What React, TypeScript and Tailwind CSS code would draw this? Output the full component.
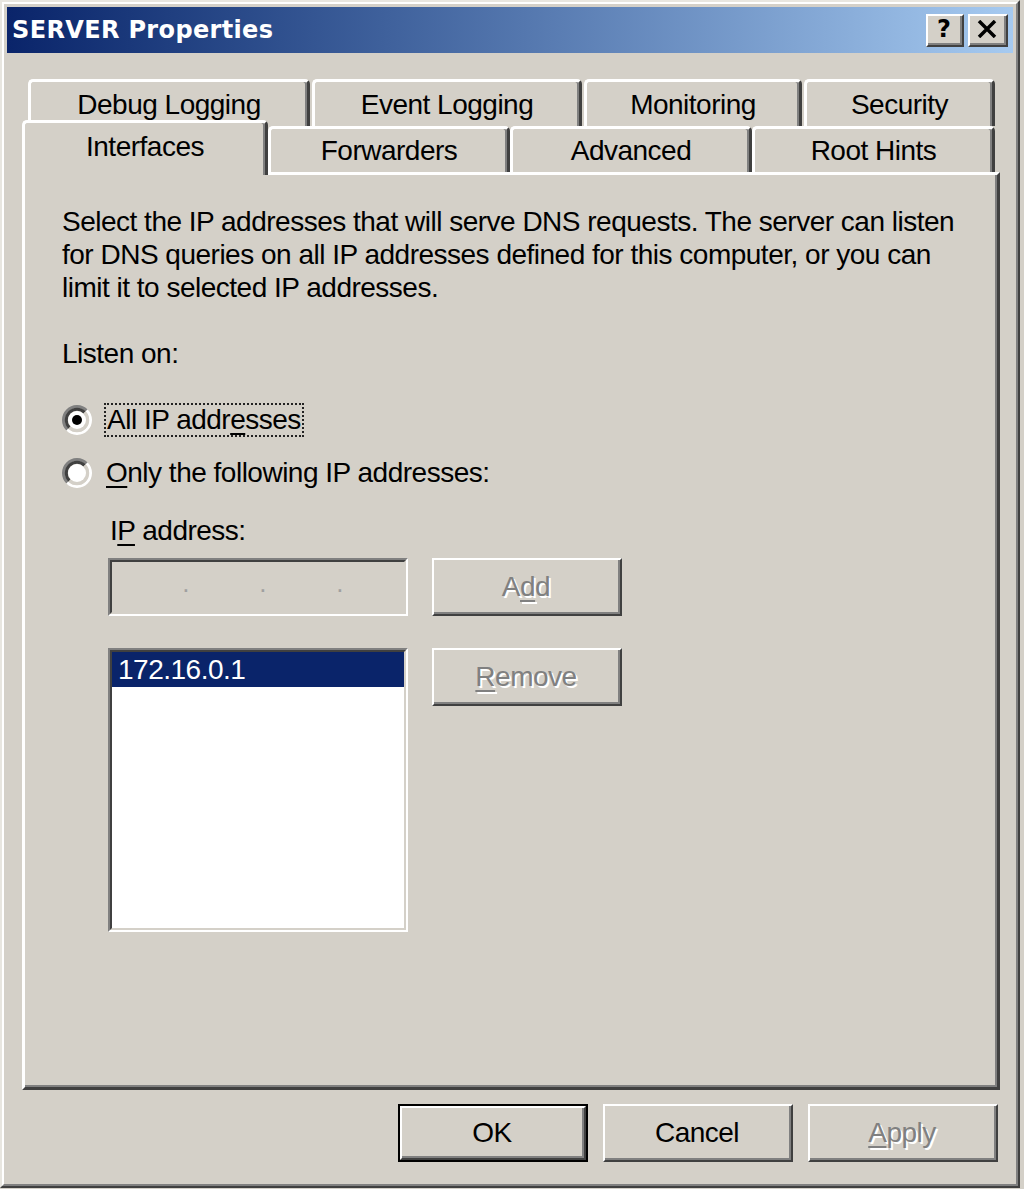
import React from "react";

function Radio({ checked }: { checked?: boolean }) {
  return (
    <svg width="30" height="30" viewBox="0 0 30 30" className="shrink-0">
      <path d="M5.45 24.55 A13.5 13.5 0 0 1 24.55 5.45" fill="none" stroke="#808080" strokeWidth="3" />
      <path d="M24.55 5.45 A13.5 13.5 0 0 1 5.45 24.55" fill="none" stroke="#ffffff" strokeWidth="3" />
      <path d="M7.42 22.58 A10.5 10.5 0 0 1 22.58 7.42" fill="none" stroke="#404040" strokeWidth="3" />
      <path d="M22.58 7.42 A10.5 10.5 0 0 1 7.42 22.58" fill="none" stroke="#d4d0c8" strokeWidth="3" />
      <circle cx="15" cy="15" r="9" fill="#ffffff" />
      {checked && <circle cx="15" cy="15" r="5" fill="#000000" />}
    </svg>
  );
}

function Raised({ children, className }: { children: React.ReactNode; className?: string }) {
  return (
    <div className={"border-[2px] border-t-white border-l-white border-r-[#404040] border-b-[#404040] bg-[#d4d0c8] " + (className ?? "")}>
      <div className="flex h-full w-full items-center justify-center border-r-[2px] border-b-[2px] border-r-[#808080] border-b-[#808080]">
        {children}
      </div>
    </div>
  );
}

function Sunken({ children, className, innerClass }: { children?: React.ReactNode; className?: string; innerClass?: string }) {
  return (
    <div className={"border-[2px] border-t-[#808080] border-l-[#808080] border-r-white border-b-white " + (className ?? "")}>
      <div className={"h-full w-full border-[2px] border-t-[#404040] border-l-[#404040] border-r-[#d4d0c8] border-b-[#d4d0c8] " + (innerClass ?? "")}>
        {children}
      </div>
    </div>
  );
}

const dis = "text-[#808080] [text-shadow:2px_2px_0_#ffffff]";

function U({ children }: { children: React.ReactNode }) {
  return <span className="underline decoration-[2px] underline-offset-[4px]">{children}</span>;
}

function BackTab({ label, w }: { label: string; w: string }) {
  return (
    <div className={"flex h-[47px] items-center justify-center rounded-t-[5px] border-l-[3px] border-t-[3px] border-r-[3px] border-l-white border-t-white border-r-[#404040] bg-[#d4d0c8] shadow-[inset_-2px_0_0_#808080] " + w}>
      {label}
    </div>
  );
}

function FrontTab({ label, w }: { label: string; w: string }) {
  return (
    <div className={"mt-[6px] flex h-[46px] items-center justify-center rounded-t-[5px] border-l-[3px] border-t-[3px] border-r-[3px] border-l-white border-t-white border-r-[#404040] bg-[#d4d0c8] shadow-[inset_-2px_0_0_#808080] " + w}>
      {label}
    </div>
  );
}

export default function App() {
  return (
    <div className="h-[1189px] w-[1024px] bg-[#d4d0c8] font-['Liberation_Sans',Arial,sans-serif] text-[28px] leading-[33px] tracking-[-0.5px] text-black">
      <div className="h-[1188px] w-[1020px] border-[2px] border-t-[#e8e6e0] border-l-[#e8e6e0] border-r-[#404040] border-b-[#404040]">
        <div className="h-full w-full border-[2px] border-t-white border-l-white border-r-[#808080] border-b-[#808080] p-[3px]">
          {/* Title bar */}
          <div className="flex h-[46px] items-center justify-between bg-linear-to-r from-[#0a246a] to-[#a6caf0] pl-[5px] pr-[5px]">
            <span className="font-['DejaVu_Sans',sans-serif] text-[24px] font-bold tracking-[0.35px] text-white">SERVER Properties</span>
            <div className="flex gap-[4px]">
              <Raised className="h-[33px] w-[38px]">
                <span className="font-['DejaVu_Sans',sans-serif] text-[24px] font-bold leading-none tracking-[0px]">?</span>
              </Raised>
              <Raised className="h-[33px] w-[40px]">
                <svg width="20" height="18" viewBox="0 0 20 18">
                  <path d="M2 1 L18 17 M18 1 L2 17" stroke="#000" strokeWidth="3.5" />
                </svg>
              </Raised>
            </div>
          </div>

          {/* Body */}
          <div className="ml-[15px] mt-[26px] w-[978px]">
            {/* Tab row 1 */}
            <div className="ml-[6px] flex gap-[2px]">
              <BackTab label="Debug Logging" w="w-[282px]" />
              <BackTab label="Event Logging" w="w-[270px]" />
              <BackTab label="Monitoring" w="w-[218px]" />
              <BackTab label="Security" w="w-[191px]" />
            </div>
            {/* Tab row 2 */}
            <div className="relative z-10 mt-[-6px] flex items-start">
              <div className="flex h-[55px] w-[246px] items-start justify-center rounded-t-[5px] border-l-[3px] border-t-[3px] border-r-[3px] border-l-white border-t-white border-r-[#404040] bg-[#d4d0c8] pt-[7px] shadow-[inset_-2px_0_0_#808080]">
                Interfaces
              </div>
              <FrontTab label="Forwarders" w="w-[242px]" />
              <FrontTab label="Advanced" w="w-[242px]" />
              <FrontTab label="Root Hints" w="w-[243px]" />
            </div>
            {/* Panel */}
            <div className="mt-[-3px] h-[918px] w-[978px] border-[3px] border-t-white border-l-white border-r-[#404040] border-b-[#404040]">
              <div className="h-full w-full border-r-[2px] border-b-[2px] border-r-[#808080] border-b-[#808080] pl-[37px] pt-[30px]">
                <p className="whitespace-nowrap">
                  Select the IP addresses that will serve DNS requests. The server can listen
                  <br />
                  for DNS queries on all IP addresses defined for this computer, or you can
                  <br />
                  limit it to selected IP addresses.
                </p>
                <div className="mt-[33px]">Listen on:</div>

                <div className="mt-[32px] flex h-[36px] items-center gap-[12px]">
                  <Radio checked />
                  <span className="border-[2px] border-dotted border-[#222] px-[1px] leading-[30px]">
                    All IP addr<U>e</U>sses
                  </span>
                </div>
                <div className="mt-[17px] flex h-[36px] items-center gap-[14px]">
                  <Radio />
                  <span className="leading-[30px]">
                    <U>O</U>nly the following IP addresses:
                  </span>
                </div>

                <div className="ml-[46px]">
                  <div className="mt-[23px] pl-[2px]">
                    I<U>P</U> address:
                  </div>
                  <div className="mt-[11px] flex gap-[24px]">
                    <Sunken className="h-[58px] w-[300px]" innerClass="bg-[#d4d0c8] flex items-center">
                      <div className="flex items-center gap-[70px] pl-[70px] pb-[8px] text-[26px] text-[#a0a0a0]">
                        <span className="w-[7px] text-center">.</span>
                        <span className="w-[7px] text-center">.</span>
                        <span className="w-[7px] text-center">.</span>
                      </div>
                    </Sunken>
                    <Raised className="h-[58px] w-[190px]">
                      <span className={dis}>
                        A<U>d</U>d
                      </span>
                    </Raised>
                  </div>
                  <div className="mt-[32px] flex items-start gap-[24px]">
                    <Sunken className="h-[284px] w-[300px]" innerClass="bg-white">
                      <div className="flex h-[35px] items-center bg-[#0a246a] pl-[6px] text-white">172.16.0.1</div>
                    </Sunken>
                    <Raised className="h-[58px] w-[190px]">
                      <span className={dis}>
                        <U>R</U>emove
                      </span>
                    </Raised>
                  </div>
                </div>
              </div>
            </div>

            {/* Buttons */}
            <div className="mr-[2px] mt-[14px] flex justify-end gap-[15px]">
              <div className="h-[58px] w-[190px] border-[2px] border-black">
                <Raised className="h-full w-full">
                  <span>OK</span>
                </Raised>
              </div>
              <Raised className="h-[58px] w-[190px]">
                <span>Cancel</span>
              </Raised>
              <Raised className="h-[58px] w-[190px]">
                <span className={dis}>
                  <U>A</U>pply
                </span>
              </Raised>
            </div>
          </div>
        </div>
      </div>
    </div>
  );
}
